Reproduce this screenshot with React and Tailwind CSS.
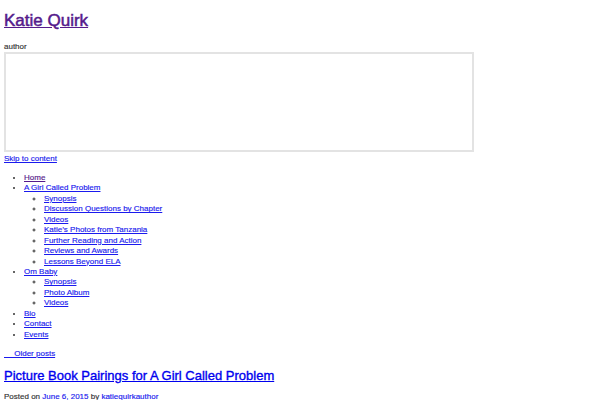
export default function App() {
  const girl = [
    "Synopsis",
    "Discussion Questions by Chapter",
    "Videos",
    "Katie\u2019s Photos from Tanzania",
    "Further Reading and Action",
    "Reviews and Awards",
    "Lessons Beyond ELA",
  ]
  const baby = ["Synopsis", "Photo Album", "Videos"]

  return (
    <div className="min-h-[400px] bg-white px-[4px] text-[8px] leading-[10.45px] text-[#333] font-['Liberation_Sans',Arial,sans-serif] [-webkit-text-stroke:0.15px]">
      {/* Site title */}
      <h1 className="pt-[10px] text-[17px] leading-[22px] font-normal [-webkit-text-stroke:0.5px]">
        <a href="#" className="text-[#551a8b] underline">Katie Quirk</a>
      </h1>

      {/* Header widget */}
      <div className="mt-[10px]">author</div>
      <div className="h-[100px] w-[470px] border-2 border-[#e3e3e3]" />

      <div className="mt-[2px]">
        <a href="#" className="text-[#1a1aee] underline">Skip to content</a>
      </div>

      {/* Menu */}
      <ul className="my-[8px] list-disc pl-[20px]">
        <li>
          <a href="#" className="text-[#551a8b] underline">Home</a>
        </li>
        <li>
          <a href="#" className="text-[#1a1aee] underline">A Girl Called Problem</a>
          <ul className="[list-style-type:circle] pl-[20px]">
            {girl.map((t) => (
              <li key={t}>
                <a href="#" className="text-[#1a1aee] underline">{t}</a>
              </li>
            ))}
          </ul>
        </li>
        <li>
          <a href="#" className="text-[#1a1aee] underline">Om Baby</a>
          <ul className="[list-style-type:circle] pl-[20px]">
            {baby.map((t) => (
              <li key={t}>
                <a href="#" className="text-[#1a1aee] underline">{t}</a>
              </li>
            ))}
          </ul>
        </li>
        <li>
          <a href="#" className="text-[#1a1aee] underline">Bio</a>
        </li>
        <li>
          <a href="#" className="text-[#1a1aee] underline">Contact</a>
        </li>
        <li>
          <a href="#" className="text-[#1a1aee] underline">Events</a>
        </li>
      </ul>

      {/* Post navigation */}
      <div className="pt-[1px]">
        <a href="#" className="text-[#1a1aee] underline">{"\u2003 Older posts"}</a>
      </div>

      {/* Post */}
      <h2 className="mt-[7px] text-[13px] leading-[17px] font-normal [-webkit-text-stroke:0.35px]">
        <a href="#" className="text-[#0000ee] underline">Picture Book Pairings for A Girl Called Problem</a>
      </h2>
      <div className="mt-[8px]">
        Posted on <a href="#" className="text-[#1a1aee] underline">June 6, 2015</a> by{" "}
        <a href="#" className="text-[#1a1aee] underline">katiequirkauthor</a>
      </div>
    </div>
  )
}
